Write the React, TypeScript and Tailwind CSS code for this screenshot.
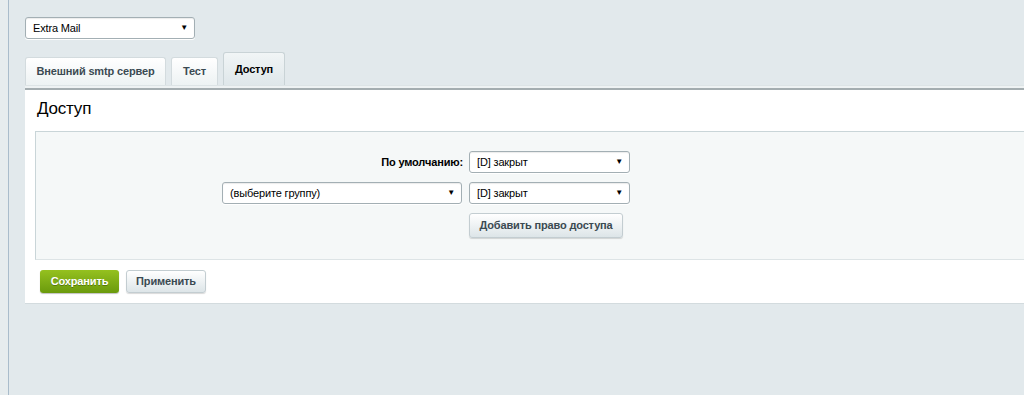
import React from "react";

const Select = ({ text, className }: { text: string; className: string }) => (
  <div
    className={`flex items-center justify-between h-[22px] bg-white border border-[#a3afb4] rounded-[3px] pl-[7px] pr-[6px] text-[11px] tracking-[-0.15px] text-black shadow-[inset_0_1px_1px_rgba(0,0,0,0.08),0_1px_0_#fff] ${className}`}
  >
    <span>{text}</span>
    <span className="text-[8px] leading-none">▼</span>
  </div>
);

const Tab = ({ label, width, active }: { label: string; width: string; active?: boolean }) => (
  <div
    className={
      active
        ? `${width} h-[33px] flex items-center justify-center border border-b-0 border-[#c9d3d6] rounded-t-[3px] bg-gradient-to-b from-[#f1f5f6] to-[#dfe7ea] text-[11px] tracking-[-0.15px] font-bold text-black`
        : `${width} h-[28px] flex items-center justify-center border border-b-0 border-[#d3dbde] rounded-t-[3px] bg-gradient-to-b from-[#ffffff] to-[#edf2f3] text-[11px] tracking-[-0.15px] font-bold text-[#3b4a52]`
    }
  >
    {label}
  </div>
);

const App = () => {
  return (
    <div
      className="w-[1024px] h-[395px] overflow-hidden flex bg-[#e2e9ec]"
      style={{ fontFamily: '"Liberation Sans", Arial, sans-serif' }}
    >
      <div className="w-[8px] shrink-0 bg-[#e6ecee]" />
      <div className="w-[1px] shrink-0 bg-[#a9bccb]" />
      <div className="flex flex-col pl-[16px] pt-[17px] shrink-0">
        <Select text="Extra Mail" className="w-[170px]" />

        <div className="flex items-end gap-[5px] mt-[13px]">
          <Tab label="Внешний smtp сервер" width="w-[141px]" />
          <Tab label="Тест" width="w-[47px]" />
          <Tab label="Доступ" width="w-[62px]" active />
        </div>

        <div className="w-[1010px] h-[3px] bg-[#eef2f3] border-t border-[#dde4e6]" />
        <div className="w-[1010px] bg-white border-t-2 border-[#a4adb0] border-b border-b-[#d3dbde] pl-[10px] pb-[10px]">
          <h2 className="text-[17px] tracking-[-0.2px] leading-[22px] text-black pl-[2px] pt-[8px] pb-[11px]">
            Доступ
          </h2>

          <div className="bg-[#f5f8f8] border-t border-l border-[#c9d5d8] border-b-[#dde4e6] border-b h-[129px] pt-[19px]">
            <div className="flex items-center gap-[6px]">
              <div className="w-[427px] text-right text-[11px] tracking-[-0.15px] font-bold text-black">
                По умолчанию:
              </div>
              <Select text="[D] закрыт" className="w-[161px]" />
            </div>
            <div className="flex items-center gap-[7px] mt-[9px]">
              <div className="w-[426px] flex justify-end">
                <Select text="(выберите группу)" className="w-[240px]" />
              </div>
              <Select text="[D] закрыт" className="w-[161px]" />
            </div>
            <div className="flex mt-[9px]">
              <div className="w-[433px]" />
              <button className="h-[25px] w-[154px] rounded-[3px] border border-[#c3cdd1] bg-gradient-to-b from-[#ffffff] to-[#dde5e8] text-[11px] tracking-[-0.15px] font-bold text-[#3b4a52] shadow-[0_1px_1px_rgba(0,0,0,0.15)]">
                Добавить право доступа
              </button>
            </div>
          </div>

          <div className="flex gap-[7px] pl-[5px] pt-[10px]">
            <button className="h-[23px] w-[79px] rounded-[3px] bg-gradient-to-b from-[#95c11f] to-[#6a9a0c] text-[11px] tracking-[-0.15px] font-bold text-white shadow-[0_1px_1px_rgba(0,0,0,0.25)] [text-shadow:0_1px_0_rgba(0,0,0,0.3)]">
              Сохранить
            </button>
            <button className="h-[23px] w-[80px] rounded-[3px] border border-[#c3cdd1] bg-gradient-to-b from-[#ffffff] to-[#dde5e8] text-[11px] tracking-[-0.15px] font-bold text-[#3b4a52] shadow-[0_1px_1px_rgba(0,0,0,0.15)]">
              Применить
            </button>
          </div>
        </div>
      </div>
    </div>
  );
};

export default App;
